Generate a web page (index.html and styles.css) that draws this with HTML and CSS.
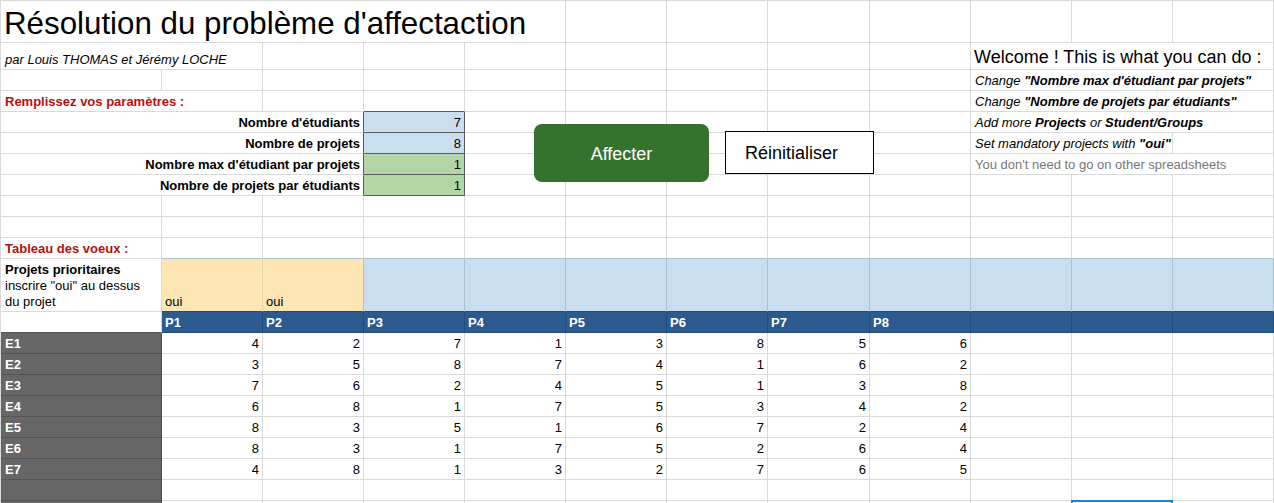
FILE: index.html
```html
<!DOCTYPE html>
<html lang="fr">
<head>
<meta charset="utf-8">
<title>Résolution du problème d'affectaction</title>
<link rel="stylesheet" href="styles.css">
</head>
<body>
<div class="page">
  <div class="sheet">
    <!-- row 1 -->
    <div class="c s5 title">Résolution du problème d'affectaction</div>
    <div class="c"></div><div class="c"></div><div class="c"></div><div class="c"></div><div class="c"></div><div class="c"></div><div class="c"></div>
    <!-- row 2 -->
    <div class="c s2 it">par Louis THOMAS et Jérémy LOCHE</div>
    <div class="c"></div><div class="c"></div><div class="c"></div><div class="c"></div><div class="c"></div><div class="c"></div><div class="c"></div>
    <div class="c s3 welcome">Welcome ! This is what you can do :</div>
    <!-- row 3 -->
    <div class="c"></div><div class="c"></div><div class="c"></div><div class="c"></div><div class="c"></div><div class="c"></div><div class="c"></div><div class="c"></div><div class="c"></div>
    <div class="c s3 it">Change&nbsp;<b>"Nombre max d'étudiant par projets"</b></div>
    <!-- row 4 -->
    <div class="c s2 red">Remplissez vos paramètres :</div>
    <div class="c"></div><div class="c vtop"></div><div class="c"></div><div class="c"></div><div class="c"></div><div class="c"></div><div class="c"></div>
    <div class="c s3 it">Change&nbsp;<b>"Nombre de projets par étudiants"</b></div>
    <!-- row 5 -->
    <div class="c s3 lbl">Nombre d'étudiants</div>
    <div class="c val blue">7</div>
    <div class="c"></div><div class="c"></div><div class="c"></div><div class="c"></div><div class="c"></div>
    <div class="c s3 it">Add more&nbsp;<b>Projects</b>&nbsp;or&nbsp;<b>Student/Groups</b></div>
    <!-- row 6 -->
    <div class="c s3 lbl">Nombre de projets</div>
    <div class="c val blue">8</div>
    <div class="c"></div><div class="c"></div><div class="c"></div><div class="c"></div><div class="c"></div>
    <div class="c s2 it">Set mandatory projects with&nbsp;<b>"oui"</b></div>
    <div class="c"></div>
    <!-- row 7 -->
    <div class="c s3 lbl">Nombre max d'étudiant par projets</div>
    <div class="c val green">1</div>
    <div class="c"></div><div class="c"></div><div class="c"></div><div class="c"></div><div class="c"></div>
    <div class="c s3 note">You don't need to go on other spreadsheets</div>
    <!-- row 8 -->
    <div class="c s3 lbl">Nombre de projets par étudiants</div>
    <div class="c val green">1</div>
    <div class="c"></div><div class="c"></div><div class="c"></div><div class="c"></div><div class="c"></div><div class="c"></div><div class="c"></div><div class="c"></div>
    <!-- row 9 -->
    <div class="c"></div><div class="c"></div><div class="c"></div><div class="c"></div><div class="c"></div><div class="c"></div><div class="c"></div><div class="c"></div><div class="c"></div><div class="c"></div><div class="c"></div><div class="c"></div>
    <!-- row 10 -->
    <div class="c"></div><div class="c"></div><div class="c"></div><div class="c"></div><div class="c"></div><div class="c"></div><div class="c"></div><div class="c"></div><div class="c"></div><div class="c"></div><div class="c"></div><div class="c"></div>
    <!-- row 11 -->
    <div class="c red">Tableau des voeux :</div>
    <div class="c edge"></div><div class="c edge"></div><div class="c edge"></div><div class="c edge"></div><div class="c edge"></div><div class="c edge"></div><div class="c edge"></div><div class="c edge"></div><div class="c edge"></div><div class="c edge"></div><div class="c edge"></div>
    <!-- row 12 -->
    <div class="c wrap"><span><b>Projets prioritaires</b><br>inscrire "oui" au dessus<br>du projet</span></div>
    <div class="c prio">oui</div><div class="c prio last">oui</div>
    <div class="c pl"></div><div class="c pl"></div><div class="c pl"></div><div class="c pl"></div><div class="c pl"></div><div class="c pl"></div><div class="c pl"></div><div class="c pl"></div><div class="c pl"></div>
    <!-- row 13 -->
    <div class="c corner"></div>
    <div class="c hd">P1</div><div class="c hd">P2</div><div class="c hd">P3</div><div class="c hd">P4</div><div class="c hd">P5</div><div class="c hd">P6</div><div class="c hd">P7</div><div class="c hd">P8</div><div class="c hd"></div><div class="c hd"></div><div class="c hd"></div>
    <!-- E1 -->
    <div class="c st">E1</div>
    <div class="c n">4</div><div class="c n">2</div><div class="c n">7</div><div class="c n">1</div><div class="c n">3</div><div class="c n">8</div><div class="c n">5</div><div class="c n">6</div>
    <div class="c"></div><div class="c"></div><div class="c"></div>
    <!-- E2 -->
    <div class="c st">E2</div>
    <div class="c n">3</div><div class="c n">5</div><div class="c n">8</div><div class="c n">7</div><div class="c n">4</div><div class="c n">1</div><div class="c n">6</div><div class="c n">2</div>
    <div class="c"></div><div class="c"></div><div class="c"></div>
    <!-- E3 -->
    <div class="c st">E3</div>
    <div class="c n">7</div><div class="c n">6</div><div class="c n">2</div><div class="c n">4</div><div class="c n">5</div><div class="c n">1</div><div class="c n">3</div><div class="c n">8</div>
    <div class="c"></div><div class="c"></div><div class="c"></div>
    <!-- E4 -->
    <div class="c st">E4</div>
    <div class="c n">6</div><div class="c n">8</div><div class="c n">1</div><div class="c n">7</div><div class="c n">5</div><div class="c n">3</div><div class="c n">4</div><div class="c n">2</div>
    <div class="c"></div><div class="c"></div><div class="c"></div>
    <!-- E5 -->
    <div class="c st">E5</div>
    <div class="c n">8</div><div class="c n">3</div><div class="c n">5</div><div class="c n">1</div><div class="c n">6</div><div class="c n">7</div><div class="c n">2</div><div class="c n">4</div>
    <div class="c"></div><div class="c"></div><div class="c"></div>
    <!-- E6 -->
    <div class="c st">E6</div>
    <div class="c n">8</div><div class="c n">3</div><div class="c n">1</div><div class="c n">7</div><div class="c n">5</div><div class="c n">2</div><div class="c n">6</div><div class="c n">4</div>
    <div class="c"></div><div class="c"></div><div class="c"></div>
    <!-- E7 -->
    <div class="c st">E7</div>
    <div class="c n">4</div><div class="c n">8</div><div class="c n">1</div><div class="c n">3</div><div class="c n">2</div><div class="c n">7</div><div class="c n">6</div><div class="c n">5</div>
    <div class="c"></div><div class="c"></div><div class="c"></div>
    <!-- row 21 -->
    <div class="c st"></div>
    <div class="c"></div><div class="c"></div><div class="c"></div><div class="c"></div><div class="c"></div><div class="c"></div><div class="c"></div><div class="c"></div><div class="c"></div><div class="c"></div><div class="c"></div>
    <!-- row 22 -->
    <div class="c st"></div>
    <div class="c"></div><div class="c"></div><div class="c"></div><div class="c"></div><div class="c"></div><div class="c"></div><div class="c"></div><div class="c"></div><div class="c"></div><div class="c sel"></div><div class="c"></div>
  </div>

  <button class="btn btn-affecter" type="button">Affecter</button>
  <button class="btn btn-reset" type="button">Réinitialiser</button>
</div>
</body>
</html>
```

FILE: styles.css
```css
html, body {
  margin: 0;
  padding: 0;
  background: #ffffff;
}

body {
  font-family: "Liberation Sans", Arial, sans-serif;
  font-size: 13px;
  color: #000000;
  overflow: hidden;
}

.page {
  position: relative;
  width: 1274px;
  height: 503px;
  overflow: hidden;
}

.sheet {
  display: grid;
  grid-template-columns: 161px repeat(6, 101px) 102px repeat(4, 101px);
  grid-template-rows: 42px 27px repeat(9, 21px) 53px repeat(10, 21px);
  width: 1274px;
  box-sizing: border-box;
  border-left: 1px solid #dadada;
  border-top: 1px solid #dadada;
}

.c {
  box-sizing: border-box;
  min-width: 0;
  border-right: 1px solid #dadada;
  border-bottom: 1px solid #dadada;
  padding: 0 3px 1px 3px;
  display: flex;
  align-items: flex-end;
  line-height: 16px;
  white-space: nowrap;
  overflow: hidden;
}

.s2 { grid-column: span 2; }
.s3 { grid-column: span 3; }
.s5 { grid-column: span 5; }

.title {
  font-size: 31.3px;
  line-height: 36px;
  padding-bottom: 0;
  overflow: visible;
}

.welcome {
  font-size: 18px;
  line-height: 22px;
  padding-left: 3px;
  padding-bottom: 1px;
}

.it { font-style: italic; padding-left: 4px; }
.it b { font-weight: bold; }

.note { color: #777777; padding-left: 4px; }

.red {
  color: #b3110f;
  font-weight: bold;
  padding-left: 4px;
}

.lbl {
  justify-content: flex-end;
  font-weight: bold;
  border-right-color: #5b5b5b;
}

.vtop { border-bottom-color: #5b5b5b; }

.val {
  justify-content: flex-end;
  border-right-color: #5b5b5b;
  border-bottom-color: #5b5b5b;
}

.blue { background: #c9dff0; }
.green { background: #b4d6a6; }

.edge { border-bottom-color: #a9c1d1; }

.wrap {
  white-space: normal;
  padding-left: 4px;
  padding-bottom: 1px;
}

.prio {
  background: #fde5b4;
  border-right-color: #e6d2a9;
  border-bottom-color: #24497a;
}

.prio.last { border-right-color: #a9c1d1; }

.pl {
  background: #c9dff0;
  border-right-color: #a9c1d1;
  border-bottom-color: #24497a;
}

.corner { border-bottom-color: #555555; }

.hd {
  background: #2d5a8e;
  color: #ffffff;
  font-weight: bold;
  border-right-color: #24497a;
  border-bottom-color: #24497a;
}

.st {
  background: #666666;
  color: #ffffff;
  font-weight: bold;
  padding-left: 4px;
  border-right-color: #4a4a4a;
  border-bottom-color: #555555;
}

.n { justify-content: flex-end; }

.sel { position: relative; overflow: visible; }
.sel::after {
  content: "";
  position: absolute;
  left: -1px;
  top: -1px;
  width: 102px;
  height: 22px;
  box-sizing: border-box;
  border: 2px solid #1a7fe6;
}

.btn {
  position: absolute;
  margin: 0;
  font-family: "Liberation Sans", Arial, sans-serif;
  font-size: 18px;
  box-sizing: border-box;
  display: flex;
  align-items: center;
  cursor: pointer;
}

.btn-affecter {
  left: 534px;
  top: 124px;
  width: 175px;
  height: 58px;
  border: none;
  border-radius: 8px;
  background: #34732e;
  color: #ffffff;
  justify-content: center;
  padding: 2px 0 0 0;
}

.btn-reset {
  left: 725px;
  top: 131px;
  width: 149px;
  height: 43px;
  border: 1px solid #000000;
  border-radius: 0;
  background: #ffffff;
  color: #000000;
  justify-content: flex-start;
  padding: 2px 0 0 19px;
}
```
